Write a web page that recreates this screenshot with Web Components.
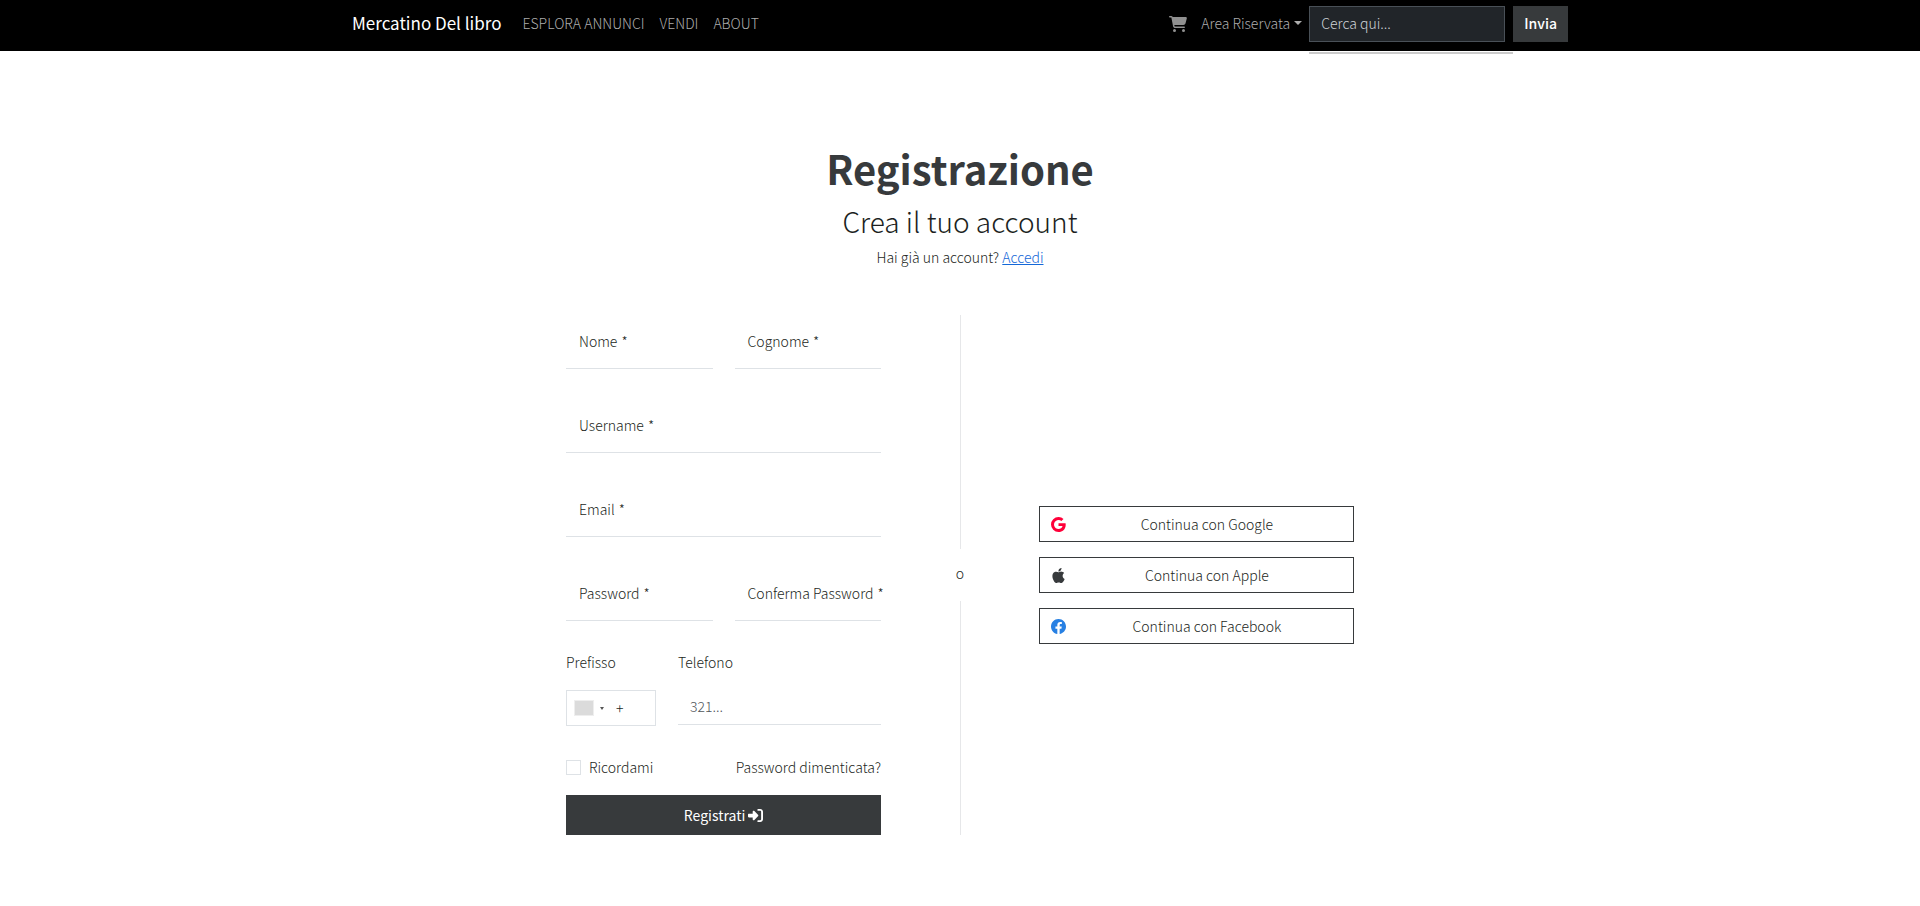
<!DOCTYPE html>
<html lang="it">
<head>
<meta charset="utf-8">
<meta name="viewport" content="width=device-width, initial-scale=1">
<title>Mercatino Del libro - Registrazione</title>
<style>
  body {
    margin: 0;
    background: #fff;
    color: #1c1f22;
    font: 300 14px/24px "Noto Sans CJK SC", "Noto Sans", sans-serif;
  }
</style>
</head>
<body>
<site-header></site-header>
<main>
  <page-title>
    <span slot="title">Registrazione</span>
    <span slot="subtitle">Crea il tuo account</span>
  </page-title>
  <account-panel>
    <register-form slot="form"></register-form>
    <social-button slot="social" provider="google">Continua con Google</social-button>
    <social-button slot="social" provider="apple">Continua con Apple</social-button>
    <social-button slot="social" provider="facebook">Continua con Facebook</social-button>
  </account-panel>
</main>

<script>
const RESET = `
  *, *::before, *::after { box-sizing: border-box; }
  button, input { font: inherit; border-radius: 0; margin: 0; }
  svg { display: block; fill: currentColor; flex: none; }
`;

const define = (name, html, setup) => {
  const template = document.createElement('template');
  template.innerHTML = html.replace('<style>', '<style>' + RESET);
  customElements.define(name, class extends HTMLElement {
    constructor() {
      super();
      this.attachShadow({ mode: 'open' }).append(template.content.cloneNode(true));
    }
    connectedCallback() {
      if (setup) setup(this, this.shadowRoot);
    }
  });
};

define('site-header', `
  <style>
    :host { display: block; background: #000; color: #adadad; }
    nav {
      display: flex; align-items: center;
      max-width: 1216px; margin: 0 auto; padding: 6px 0 9px;
    }
    a { color: inherit; text-decoration: none; }
    .brand, ul, .menu { padding: 0 0 2px; }
    .brand { color: #fff; font-size: 17px; font-weight: 400; margin-right: 21px; }
    ul { display: flex; gap: 15px; list-style: none; margin: 0; }
    .right { margin-left: auto; display: flex; align-items: center; }
    .cart { margin-right: 14px; color: #909090; }
    .menu {
      display: flex; align-items: center; gap: 4px;
      background: none; border: 0; color: inherit; margin-right: 7px;
    }
    .menu::after { content: ""; border: 4px solid transparent; border-top-color: currentColor; border-bottom: 0; }
    form { display: flex; }
    .search { position: relative; padding-right: 8px; }
    .search input {
      display: block; width: 196px; height: 36px; padding: 0 11px 2px;
      color: #dee2e6; background: #212529; border: 1px solid #495057;
    }
    .search input::placeholder { color: #ced2d6; opacity: 1; }
    .results { position: absolute; left: 0; right: 0; top: 46px; height: 2px; background: #cbcbcb; }
    .send { height: 36px; padding: 0 11px 2px; border: 0; background: #373a3c; color: #fff; font-weight: 500; }
  </style>
  <nav>
    <a class="brand" href="#">Mercatino Del libro</a>
    <ul>
      <li><a href="#">ESPLORA ANNUNCI</a></li>
      <li><a href="#">VENDI</a></li>
      <li><a href="#">ABOUT</a></li>
    </ul>
    <div class="right">
      <a class="cart" href="#" aria-label="Carrello">
        <svg width="18" height="16" viewBox="0 0 576 512"><path d="M0 24C0 10.7 10.7 0 24 0H69.5c22 0 41.5 12.8 50.6 32h411c26.3 0 45.5 25 38.6 50.4l-41 152.3c-8.5 31.4-37 53.3-69.5 53.3H170.7l5.4 28.5c2.2 11.3 12.1 19.5 23.6 19.5H488c13.3 0 24 10.7 24 24s-10.7 24-24 24H199.7c-34.6 0-64.3-24.6-70.7-58.5L77.4 54.5c-.7-3.8-4-6.5-7.9-6.5H24C10.7 48 0 37.3 0 24zM128 464a48 48 0 1 1 96 0 48 48 0 1 1 -96 0zm336-48a48 48 0 1 1 0 96 48 48 0 1 1 0-96z"/></svg>
      </a>
      <button class="menu" type="button" aria-haspopup="true">Area Riservata</button>
      <form>
        <div class="search">
          <input type="search" placeholder="Cerca qui..." aria-label="Cerca">
          <div class="results"></div>
        </div>
        <button class="send" type="submit">Invia</button>
      </form>
    </div>
  </nav>
`);

define('page-title', `
  <style>
    :host { display: block; text-align: center; padding: 93px 12px 46px; }
    h1, h2, p { margin: 0; }
    h1 { font-size: 40px; line-height: 48px; font-weight: 700; margin-bottom: 12px; color: #373a3c; }
    h2 { font-size: 28px; line-height: 34px; font-weight: 300; margin-bottom: 7px; }
    a { color: #1468d8; }
  </style>
  <h1><slot name="title"></slot></h1>
  <h2><slot name="subtitle"></slot></h2>
  <p>Hai già un account? <a href="#">Accedi</a></p>
`);

define('account-panel', `
  <style>
    :host {
      display: grid; grid-template-columns: 2fr 1fr 2fr;
      max-width: 788px; margin: 0 auto 71px;
    }
    .divider { display: flex; flex-direction: column; align-items: center; }
    .divider::before, .divider::after { content: ""; flex: 1; width: 1px; margin-left: 1px; background: #e6e7e9; }
    .divider span { padding: 12px 0 16px; }
    .social { display: flex; flex-direction: column; justify-content: center; gap: 15px; }
  </style>
  <slot name="form"></slot>
  <div class="divider"><span>o</span></div>
  <div class="social"><slot name="social"></slot></div>
`);

define('form-field', `
  <style>
    :host { display: grid; grid-template-columns: minmax(0, 1fr); min-width: 0; }
    label, input { grid-area: 1 / 1; }
    label {
      align-self: center; padding: 0 0 2px 13px; white-space: nowrap;
      pointer-events: none; z-index: 1;
    }
    label::after { content: "*"; margin-left: 4px; }
    input {
      width: 100%; height: 54px; padding: 12px; color: inherit;
      background: transparent; border: 0; border-bottom: 1px solid #dee2e6;
    }
  </style>
  <label for="control"></label>
  <input id="control" required>
`, (host, root) => {
  root.querySelector('label').textContent = host.getAttribute('label');
  root.querySelector('input').type = host.getAttribute('type') || 'text';
});

define('phone-field', `
  <style>
    :host { display: grid; grid-template-columns: 90px 1fr; column-gap: 22px; row-gap: 17px; align-items: start; }
    label { line-height: 22px; }
    .prefix { display: flex; align-items: center; height: 36px; padding-left: 7px; border: 1px solid #dee2e6; }
    .flag { display: flex; align-items: center; gap: 6px; border: 0; background: none; padding: 0; color: #555; }
    .flag::before { content: ""; width: 20px; height: 16px; background: #dbdbdb; border: 1px solid #eee; }
    .flag::after { content: ""; border: 2px solid transparent; border-top: 3px solid currentColor; border-bottom: 0; }
    input { width: 100%; min-width: 0; color: inherit; background: transparent; border: 0; padding: 0 0 0 12px; }
    #tel { height: 35px; padding-bottom: 2px; border-bottom: 1px solid #dee2e6; }
    #tel::placeholder { color: #50555a; opacity: 1; }
  </style>
  <label for="code">Prefisso</label>
  <label for="tel">Telefono</label>
  <div class="prefix">
    <button class="flag" type="button" aria-label="Paese"></button>
    <input id="code" value="+">
  </div>
  <input id="tel" type="tel" placeholder="321...">
`);

define('register-form', `
  <style>
    :host { display: block; min-width: 0; }
    form { display: grid; grid-template-columns: 1fr 1fr; gap: 30px 22px; }
    .wide { grid-column: 1 / -1; }
    .actions { display: grid; gap: 17px; }
    .options { display: flex; justify-content: space-between; line-height: 22px; }
    .options label { display: flex; align-items: center; gap: 8px; }
    .options input { appearance: none; width: 15px; height: 15px; border: 1px solid #dee2e6; background: #fff; }
    a { color: inherit; text-decoration: none; }
    .submit {
      display: flex; align-items: center; justify-content: center; gap: 3px;
      height: 40px; border: 0; background: #373a3c; color: #fff; font-weight: 400;
    }
  </style>
  <form>
    <form-field label="Nome"></form-field>
    <form-field label="Cognome"></form-field>
    <form-field class="wide" label="Username"></form-field>
    <form-field class="wide" label="Email" type="email"></form-field>
    <form-field label="Password" type="password"></form-field>
    <form-field label="Conferma Password" type="password"></form-field>
    <phone-field class="wide"></phone-field>
    <div class="actions wide">
      <div class="options">
        <label><input type="checkbox">Ricordami</label>
        <a href="#">Password dimenticata?</a>
      </div>
      <button class="submit" type="submit">Registrati
        <svg width="15" height="15" viewBox="0 0 512 512"><path d="M217.9 105.9L340.7 228.7c7.2 7.2 11.3 17.1 11.3 27.3s-4.1 20.1-11.3 27.3L217.9 406.1c-6.4 6.4-15 9.9-24 9.9c-18.7 0-33.9-15.2-33.9-33.9l0-62.1L32 320c-17.7 0-32-14.3-32-32l0-64c0-17.7 14.3-32 32-32l128 0 0-62.1c0-18.7 15.2-33.9 33.9-33.9c9 0 17.6 3.6 24 9.9zM352 416l64 0c17.7 0 32-14.3 32-32l0-256c0-17.7-14.3-32-32-32l-64 0c-17.7 0-32-14.3-32-32s14.3-32 32-32l64 0c53 0 96 43 96 96l0 256c0 53-43 96-96 96l-64 0c-17.7 0-32-14.3-32-32s14.3-32 32-32z"/></svg>
      </button>
    </div>
  </form>
`);

const PROVIDERS = {
  google: ['#ff0039', 'M15.545 6.558a9.42 9.42 0 0 1 .139 1.626c0 2.434-.87 4.492-2.384 5.885h.002C11.978 15.292 10.158 16 8 16A8 8 0 1 1 8 0a7.689 7.689 0 0 1 5.352 2.082l-2.284 2.284A4.347 4.347 0 0 0 8 3.166c-2.087 0-3.86 1.408-4.492 3.304a4.792 4.792 0 0 0 0 3.063h.003c.635 1.893 2.405 3.301 4.492 3.301 1.078 0 2.004-.276 2.722-.764h-.003a3.702 3.702 0 0 0 1.599-2.431H8v-3.08h7.545z'],
  apple: ['#373a3c', 'M11.182.008C11.148-.03 9.923.023 8.857 1.18c-1.066 1.156-.902 2.482-.878 2.516.024.034 1.52.087 2.475-1.258.955-1.345.762-2.391.728-2.43zm3.314 11.733c-.048-.096-2.325-1.234-2.113-3.422.212-2.189 1.675-2.789 1.698-2.854.023-.065-.597-.79-1.254-1.157a3.692 3.692 0 0 0-1.563-.434c-.108-.003-.483-.095-1.254.116-.508.139-1.653.589-1.968.607-.316.018-1.256-.522-2.267-.665-.647-.125-1.333.131-1.824.328-.49.196-1.422.754-2.074 2.237-.652 1.482-.311 3.83-.067 4.56.244.729.625 1.924 1.273 2.796.576.984 1.34 1.667 1.659 1.899.319.232 1.219.386 1.843.067.502-.308 1.408-.485 1.766-.472.357.013 1.061.154 1.782.539.571.197 1.111.115 1.652-.105.541-.221 1.324-1.059 2.238-2.758.347-.79.505-1.217.473-1.282z'],
  facebook: ['#2780e3', 'M16 8.049c0-4.446-3.582-8.05-8-8.05C3.58 0-.002 3.603-.002 8.05c0 4.017 2.926 7.347 6.75 7.951v-5.625h-2.03V8.05H6.75V6.275c0-2.017 1.195-3.131 3.022-3.131.876 0 1.791.157 1.791.157v1.98h-1.009c-.993 0-1.303.621-1.303 1.258v1.51h2.218l-.354 2.326H9.25V16c3.824-.604 6.75-3.934 6.75-7.951z']
};

define('social-button', `
  <style>
    :host { display: block; }
    button {
      display: flex; align-items: center; gap: 6px; width: 100%; height: 36px;
      padding: 0 11px; color: inherit; background: #fff; border: 1px solid #373a3c;
    }
    span { flex: 1; text-align: center; }
  </style>
  <button type="button">
    <svg width="15" height="15" viewBox="0 0 16 16"><path/></svg>
    <span><slot></slot></span>
  </button>
`, (host, root) => {
  const [color, shape] = PROVIDERS[host.getAttribute('provider')];
  root.querySelector('svg').style.color = color;
  root.querySelector('path').setAttribute('d', shape);
});
</script>
</body>
</html>
